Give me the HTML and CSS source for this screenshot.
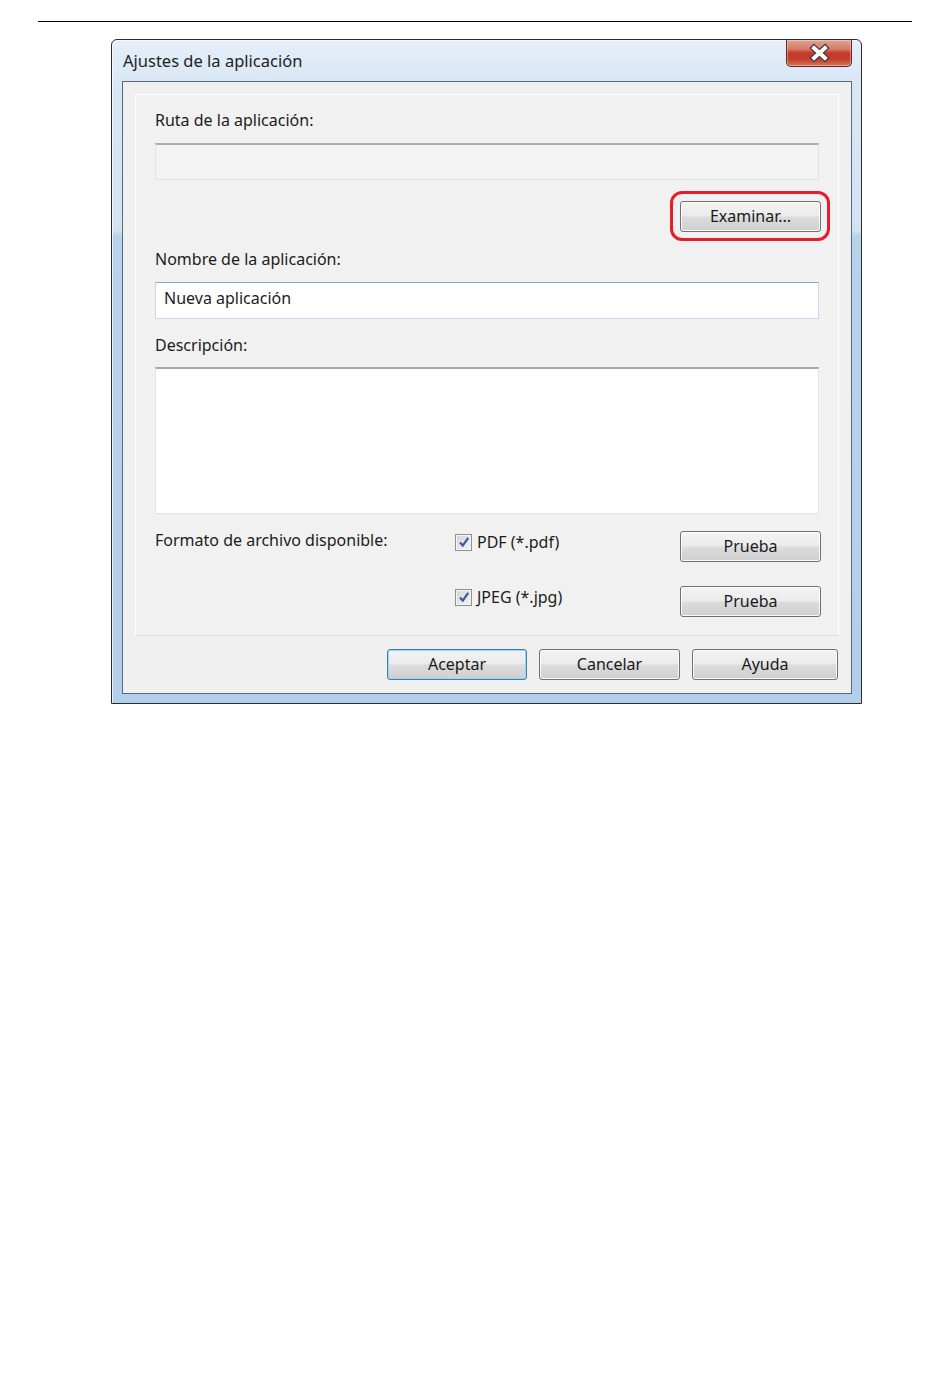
FILE: index.html
```html
<!DOCTYPE html>
<html lang="es">
<head>
<meta charset="utf-8">
<title>Ajustes de la aplicación</title>
<link rel="stylesheet" href="styles.css">
</head>
<body>
<div class="page">
  <div class="rule"></div>
  <div class="window">
    <div class="titlebar">
      <span class="title">Ajustes de la aplicación</span>
      <div class="close">
        <svg width="66" height="27" viewBox="0 0 66 27">
          <path d="M28 9 L39 19 M39 9 L28 19" stroke="#3b3b3b" stroke-width="6.4" stroke-linecap="square" fill="none"/>
          <path d="M28 9 L39 19 M39 9 L28 19" stroke="#ffffff" stroke-width="4" stroke-linecap="square" fill="none"/>
        </svg>
      </div>
    </div>
    <div class="client">
      <div class="panel">
        <div class="label">Ruta de la aplicación:</div>
        <div class="field field-disabled"></div>
        <div class="browse-row">
          <div class="btn-wrap">
            <div class="btn btn-browse">Examinar...</div>
            <span class="ring"></span>
          </div>
        </div>
        <div class="label label-gap">Nombre de la aplicación:</div>
        <div class="field field-active">Nueva aplicación</div>
        <div class="label label-gap2">Descripción:</div>
        <div class="textarea"></div>
        <div class="formats">
          <div class="label">Formato de archivo disponible:</div>
          <div class="check"><span class="box"><svg width="12" height="12" viewBox="0 0 12 12"><path d="M2 6.5 L4.8 9.6 L10.2 1.8" stroke="#3a56a8" stroke-width="2.2" fill="none"/></svg></span>PDF (*.pdf)</div>
          <div class="btn btn-test">Prueba</div>
          <div></div>
          <div class="check"><span class="box"><svg width="12" height="12" viewBox="0 0 12 12"><path d="M2 6.5 L4.8 9.6 L10.2 1.8" stroke="#3a56a8" stroke-width="2.2" fill="none"/></svg></span>JPEG (*.jpg)</div>
          <div class="btn btn-test">Prueba</div>
        </div>
      </div>
      <div class="actions">
        <div class="btn btn-default btn-ok">Aceptar</div>
        <div class="btn btn-cancel">Cancelar</div>
        <div class="btn btn-help">Ayuda</div>
      </div>
    </div>
  </div>
</div>
</body>
</html>
```

FILE: styles.css
```css
* { box-sizing: border-box; }
html, body { margin: 0; padding: 0; background: #ffffff; }
body {
  font-family: "Noto Sans", "Open Sans", sans-serif;
  font-size: 16px;
  color: #1c1c1c;
}
.page { width: 950px; height: 1397px; padding-top: 21px; }
.rule {
  margin-left: 38px;
  width: 874px;
  height: 1px;
  background: #000;
}
.window {
  margin-top: 17px;
  margin-left: 111px;
  width: 751px;
  border: 1px solid #2c2c2c;
  border-radius: 6px 6px 0 0;
  padding: 0 9px 9px 10px;
  background: linear-gradient(to bottom, #e6eff9 0px, #d9e7f5 42px, #d3e3f3 190px, #b9d2ec 196px, #b4cfeb 100%);
  box-shadow: inset 1px 1px 0 rgba(255,255,255,0.7);
}
.titlebar {
  height: 41px;
  display: flex;
  justify-content: space-between;
  align-items: center;
  padding-left: 1px;
}
.title { font-size: 16.5px; color: #1e1e1e; }
.close {
  align-self: flex-start;
  width: 66px;
  height: 27px;
  border: 1px solid #5b2b24;
  border-top: none;
  border-radius: 0 0 5px 5px;
  background: linear-gradient(to bottom, #e2a394 0%, #d67a68 35%, #c5382a 50%, #c3402d 75%, #d8745a 100%);
  box-shadow: inset 0 0 0 1px rgba(255,255,255,0.35);
}
.close svg { display: block; margin: -1px 0 0 -1px; }
.client {
  border: 1px solid #59687a;
  background: #f0f0f0;
  padding: 12px 12px 13px 12px;
}
.panel {
  border: 1px solid #ffffff;
  border-bottom-color: #dae2e9;
  background: #f1f1f1;
  padding: 15px 19px 18px 19px;
}
.label {
  line-height: 20px;
  height: 20px;
  white-space: nowrap;
}
.label-gap { margin-top: 17px; }
.label-gap2 { margin-top: 16px; }
.field {
  margin-top: 13px;
  height: 37px;
  line-height: 31px;
  padding-left: 8px;
}
.field-disabled {
  background: #f3f3f3;
  border: 1px solid #e2e2e2;
  border-top: 2px solid #aeaeae;
}
.field-active {
  background: #ffffff;
  border: 1px solid #c6d9ee;
  border-top-color: #86a9d4;
}
.browse-row {
  margin-top: 21px;
  margin-right: -2px;
  display: flex;
  justify-content: flex-end;
}
.btn-wrap { position: relative; }
.ring {
  position: absolute;
  left: -10px; top: -10px; right: -9px; bottom: -9px;
  border: 3px solid #e41f2b;
  border-radius: 12px;
  pointer-events: none;
}
.btn {
  height: 31px;
  border: 1px solid #707070;
  border-radius: 3px;
  background: linear-gradient(to bottom, #f3f3f3 0%, #ebebeb 48%, #dcdcdc 52%, #cfcfcf 100%);
  box-shadow: inset 0 0 0 1px rgba(255,255,255,0.85);
  display: flex;
  align-items: center;
  justify-content: center;
  color: #1a1a1a;
  padding-bottom: 2px;
}
.btn-browse { width: 141px; }
.textarea {
  margin-top: 12px;
  height: 147px;
  background: #ffffff;
  border: 1px solid #e2e3ea;
  border-top: 2px solid #a8a8a8;
}
.formats {
  margin-top: 16px;
  margin-right: -2px;
  display: grid;
  grid-template-columns: 300px 225px 141px;
  grid-auto-rows: 32px;
  row-gap: 23px;
}
.formats .btn-test { margin-top: 1px; }
.check {
  display: flex;
  align-items: center;
  height: 16px;
  margin-top: 4px;
  white-space: nowrap;
}
.box {
  width: 17px;
  height: 17px;
  margin-right: 5px;
  border: 1px solid #8e8f8f;
  background: linear-gradient(135deg, #d6d6d6 0%, #f2f2f2 100%);
  box-shadow: inset 0 0 0 1px #f4f4f4;
  display: flex;
  align-items: center;
  justify-content: center;
}
.box svg { display: block; }
.actions {
  margin-top: 13px;
  margin-right: 1px;
  display: flex;
  justify-content: flex-end;
  gap: 12px;
}
.btn-ok { width: 140px; }
.btn-cancel { width: 141px; }
.btn-help { width: 146px; }
.btn-default {
  border-color: #3c7fb1;
  box-shadow: inset 0 0 0 1px #9bd5f7;
}
```
